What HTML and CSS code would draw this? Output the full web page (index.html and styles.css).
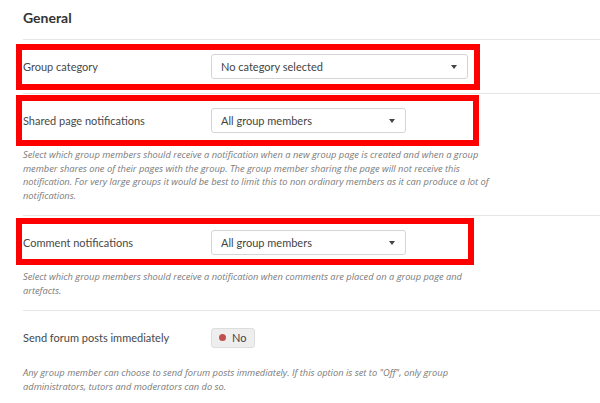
FILE: index.html
```html
<!DOCTYPE html>
<html lang="en">
<head>
    <meta charset="UTF-8">
    <title>Group settings - General</title>
    <link rel="stylesheet" href="styles.css">
</head>
<body>
    <main class="settings">
        <h2 class="settings-title">General</h2>

        <div class="setting-row setting-row-plain">
            <div class="setting-field">
                <label class="setting-label" for="category">Group category</label>
                <div class="select select-wide" id="category">
                    <span>No category selected</span>
                    <span class="select-arrow"></span>
                </div>
            </div>
        </div>

        <div class="setting-row">
            <div class="setting-field">
                <label class="setting-label" for="shared">Shared page notifications</label>
                <div class="select" id="shared">
                    <span>All group members</span>
                    <span class="select-arrow"></span>
                </div>
            </div>
            <p class="setting-desc">Select which group members should receive a notification when a new group page is created and when a group member shares one of their pages with the group. The group member sharing the page will not receive this notification. For very large groups it would be best to limit this to non ordinary members as it can produce a lot of notifications.</p>
        </div>

        <div class="setting-row">
            <div class="setting-field">
                <label class="setting-label" for="comments">Comment notifications</label>
                <div class="select" id="comments">
                    <span>All group members</span>
                    <span class="select-arrow"></span>
                </div>
            </div>
            <p class="setting-desc">Select which group members should receive a notification when comments are placed on a group page and artefacts.</p>
        </div>

        <div class="setting-row">
            <div class="setting-field">
                <label class="setting-label" for="forum">Send forum posts immediately</label>
                <button type="button" class="switch" id="forum"><span class="switch-dot"></span>No</button>
            </div>
            <p class="setting-desc setting-desc-last">Any group member can choose to send forum posts immediately. If this option is set to "Off", only group administrators, tutors and moderators can do so.</p>
        </div>

        <!-- highlight boxes drawn over the form -->
        <div class="highlight highlight-1"></div>
        <div class="highlight highlight-2"></div>
        <div class="highlight highlight-3"></div>
    </main>
</body>
</html>
```

FILE: styles.css
```css
:root {
    --text-color: #484848;
    --muted-color: #7a7a7a;
    --line-color: #e6e6e6;
    --highlight: #ff0000;
}

body {
    margin: 0;
    font-family: 'Lato', 'Open Sans', sans-serif;
    color: var(--text-color);
    background: #fff;
}

.settings {
    position: relative;
    padding-left: 23px;
}

.settings-title {
    margin: 0;
    height: 39px;
    line-height: 35px;
    font-size: 14px;
    font-weight: 700;
    color: #333;
    border-bottom: 1px solid var(--line-color);
}

.setting-row {
    padding: 14px 0 13px;
    border-bottom: 1px solid var(--line-color);
}

.setting-row-plain {
    padding-bottom: 14px;
}

.setting-row:last-of-type {
    border-bottom: none;
}

.setting-field {
    display: flex;
    align-items: center;
    height: 25px;
}

.setting-label {
    width: 188px;
    font-size: 11px;
}

.select {
    display: flex;
    align-items: center;
    justify-content: space-between;
    box-sizing: border-box;
    width: 195px;
    height: 25px;
    padding: 0 10px 0 9px;
    border: 1px solid #d4d4d4;
    border-radius: 3px;
    font-size: 11px;
    color: #444;
}

.select-wide {
    width: 257px;
}

.select-arrow {
    width: 0;
    height: 0;
    border-left: 3px solid transparent;
    border-right: 3px solid transparent;
    border-top: 4px solid #444;
}

.setting-desc {
    margin: 15px 0 0;
    width: 470px;
    font-family: 'Open Sans', sans-serif;
    font-size: 9.3px;
    line-height: 13.5px;
    font-style: italic;
    color: var(--muted-color);
}

.setting-desc-last {
    margin-top: 16px;
}

.switch {
    display: flex;
    align-items: center;
    gap: 6px;
    height: 20px;
    padding: 0 8px 0 7px;
    border: 1px solid #ddd;
    border-radius: 3px;
    background: #eee;
    font-family: inherit;
    font-size: 11px;
    color: #444;
}

.switch-dot {
    width: 7px;
    height: 7px;
    border-radius: 50%;
    background: #c0504d;
}

.highlight {
    position: absolute;
    left: 16px;
    border: 6px solid var(--highlight);
    box-sizing: border-box;
}

.highlight-1 {
    top: 44px;
    width: 464px;
    height: 46px;
}

.highlight-2 {
    top: 95px;
    width: 463px;
    height: 51px;
}

.highlight-3 {
    top: 218px;
    width: 458px;
    height: 47px;
}
```
